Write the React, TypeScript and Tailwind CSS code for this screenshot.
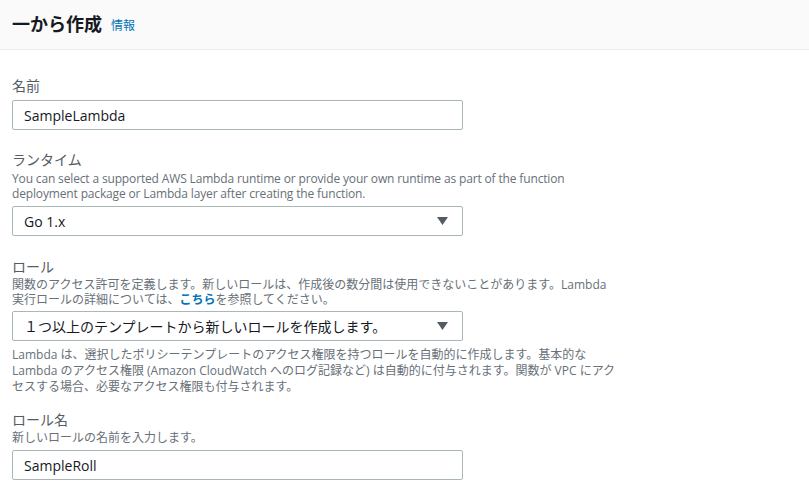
const jp = "font-['Open_Sans','Noto_Sans_CJK_JP',sans-serif]"

function Label({ text }: { text: string }) {
  return <div className="text-[14px] leading-[20px] text-[#545b64]">{text}</div>
}

function TextInput({ value }: { value: string }) {
  return (
    <div className="w-[451px] h-[30px] flex items-center px-[11px] border border-[#aab7b8] rounded-[2px] text-[14px] text-[#16191f] bg-white">
      {value}
    </div>
  )
}

function Select({ value }: { value: string }) {
  return (
    <div className="w-[451px] h-[30px] flex items-center justify-between pl-[11px] pr-[14px] border border-[#aab7b8] rounded-[2px] text-[14px] text-[#16191f] bg-white">
      <span>{value}</span>
      <svg width="11" height="8" viewBox="0 0 11 8">
        <polygon points="0,0 11,0 5.5,8" fill="#545b64" />
      </svg>
    </div>
  )
}

export default function App() {
  return (
    <div className={`w-[809px] h-[487px] bg-white overflow-hidden ${jp}`}>
      <div className="h-[50px] bg-[#fafafa] border-b border-[#eaeded] flex items-center px-3 gap-[9px]">
        <h2 className="text-[18px] font-bold text-[#16191f]">一から作成</h2>
        <a className="text-[12px] text-[#0073bb] mt-[2px]">情報</a>
      </div>

      <div className="px-3 flex flex-col">
        <div className="mt-[26px]">
          <Label text="名前" />
        </div>
        <div className="mt-[4px]">
          <TextInput value="SampleLambda" />
        </div>

        <div className="mt-[20px]">
          <Label text="ランタイム" />
        </div>
        <div className="mt-[1px] text-[12px] leading-[15px] text-[#687078] whitespace-nowrap tracking-[-0.15px]">
          You can select a supported AWS Lambda runtime or provide your own runtime as part of the function
          <br />
          deployment package or Lambda layer after creating the function.
        </div>
        <div className="mt-[5px]">
          <Select value="Go 1.x" />
        </div>

        <div className="mt-[21px]">
          <Label text="ロール" />
        </div>
        <div className="text-[12px] leading-[15px] text-[#687078] whitespace-nowrap">
          関数のアクセス許可を定義します。新しいロールは、作成後の数分間は使用できないことがあります。Lambda
          <br />
          実行ロールの詳細については、<a className="font-bold text-[#0073bb]">こちら</a>を参照してください。
        </div>
        <div className="mt-[4px]">
          <Select value="１つ以上のテンプレートから新しいロールを作成します。" />
        </div>
        <div className="mt-[6px] text-[12px] leading-[16px] text-[#687078] whitespace-nowrap">
          Lambda は、選択したポリシーテンプレートのアクセス権限を持つロールを自動的に作成します。基本的な
          <br />
          Lambda のアクセス権限 (Amazon CloudWatch へのログ記録など) は自動的に付与されます。関数が VPC にアク
          <br />
          セスする場合、必要なアクセス権限も付与されます。
        </div>

        <div className="mt-[15px]">
          <Label text="ロール名" />
        </div>
        <div className="text-[12px] leading-[15px] text-[#687078]">新しいロールの名前を入力します。</div>
        <div className="mt-[5px]">
          <TextInput value="SampleRoll" />
        </div>
      </div>
    </div>
  )
}
